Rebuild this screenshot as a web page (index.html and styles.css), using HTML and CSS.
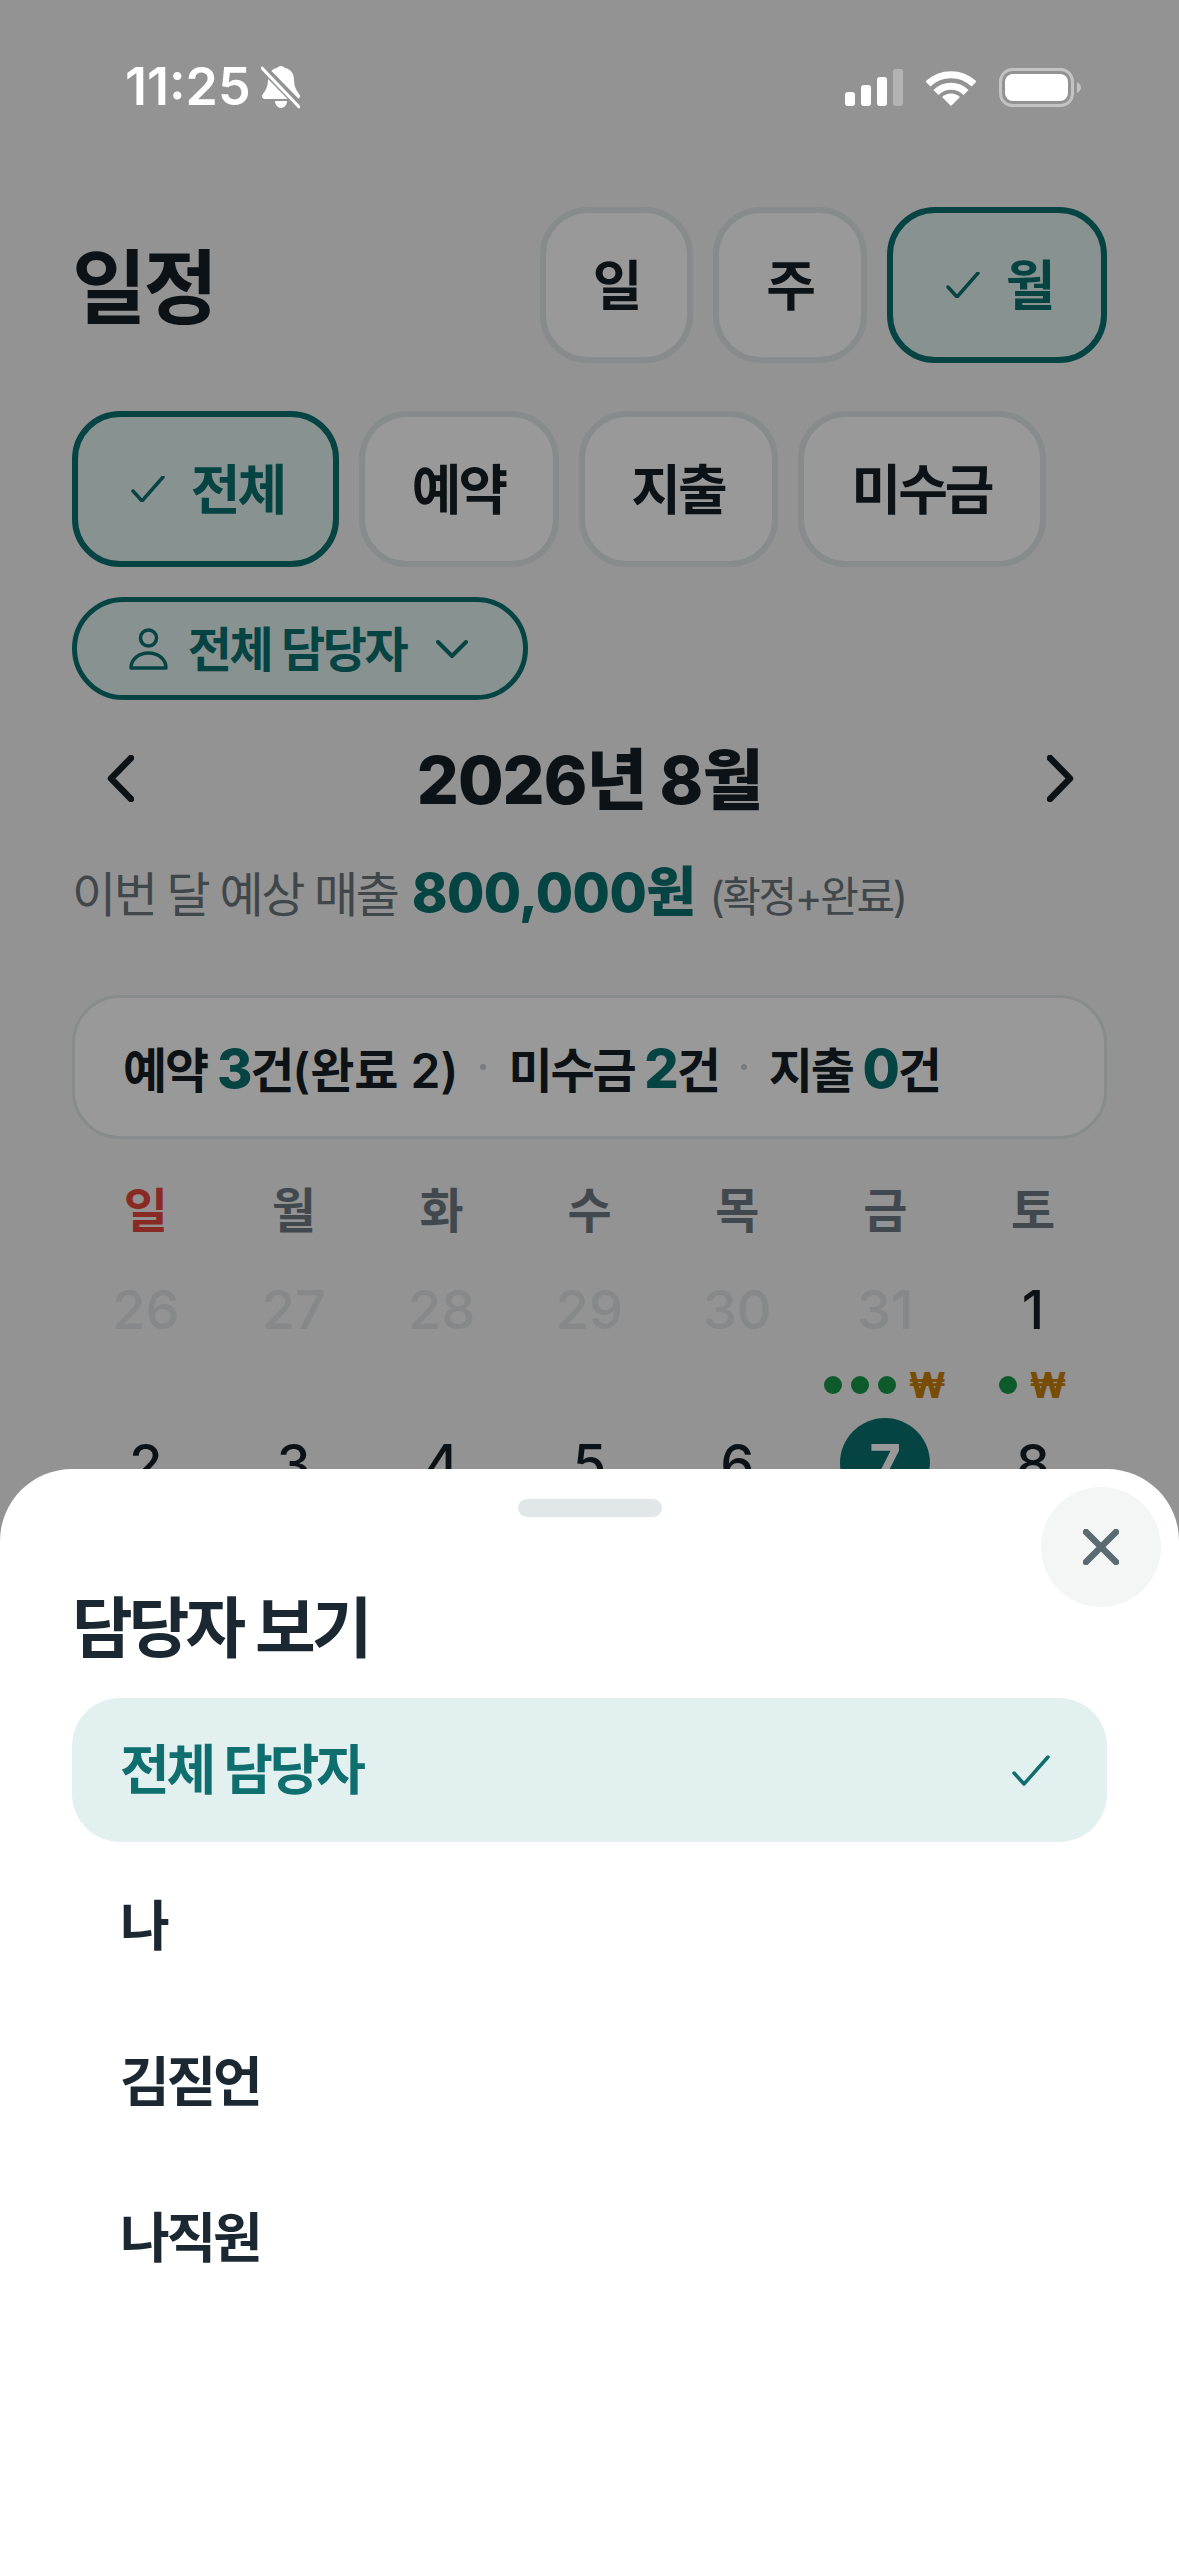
FILE: index.html
```html
<!DOCTYPE html>
<html lang="ko">

<head>
    <meta charset="UTF-8">
    <meta name="viewport" content="width=device-width, initial-scale=1.0">
    <title>일정</title>
    <link rel="stylesheet" href="styles.css">
</head>

<body>
    <!-- 상태바 -->
    <div class="status">
        <div class="status-left">
            <span class="time">11:25</span>
            <svg class="bell" width="39" height="43" viewBox="0 0 39 43">
                <path d="M20 0c2 0 3 1 4 2 6 1 9 6 9 12 0 6 2 10 5 14 2 2 1 5-2 5H4c-3 0-4-3-2-5 3-4 5-8 5-14 0-6 3-11 9-12 1-1 2-2 4-2z" fill="#fff" />
                <path d="M14 35h12c0 4-3 7-6 7s-6-3-6-7z" fill="#fff" />
                <path d="M0 0l39 40" stroke="#919392" stroke-width="8" />
                <path d="M1 2l37 39" stroke="#fff" stroke-width="3" stroke-linecap="round" />
            </svg>
        </div>
        <div class="status-right">
            <svg width="58" height="37" viewBox="0 0 58 37">
                <rect x="0" y="23" width="10" height="14" rx="3" fill="#fff" />
                <rect x="16" y="16" width="10" height="21" rx="3" fill="#fff" />
                <rect x="32" y="8" width="10" height="29" rx="3" fill="#fff" />
                <rect x="48" y="0" width="10" height="37" rx="3" fill="#fff" opacity="0.3" />
            </svg>
            <svg width="50" height="37" viewBox="0 0 50 37">
                <path d="M2 15a33 33 0 0 1 46 0M10 23.500a21 21 0 0 1 30 0" fill="none" stroke="#fff" stroke-width="7" />
                <path d="M25 37l-9-9a13 13 0 0 1 18 0z" fill="#fff" />
            </svg>
            <svg width="82" height="39" viewBox="0 0 82 39">
                <rect x="1.500" y="1.500" width="72" height="36" rx="12" fill="none" stroke="#fff" stroke-opacity="0.45" stroke-width="3" />
                <rect x="6" y="6" width="63" height="27" rx="8" fill="#fff" />
                <path d="M78 14c2 1 4 3 4 5.500s-2 4.500-4 5.500z" fill="#fff" fill-opacity="0.45" />
            </svg>
        </div>
    </div>

    <div class="page">
        <!-- 제목 + 보기 전환 -->
        <div class="header">
            <h1>일정</h1>
            <div class="chips">
                <div class="chip view-day">일</div>
                <div class="chip view-week">주</div>
                <div class="chip view-month active">
                    <svg width="34" height="26" viewBox="0 0 34 26"><path d="M2 15l9 10L32 1" fill="none" stroke="currentColor" stroke-width="3.500" stroke-linecap="round" stroke-linejoin="round" /></svg>
                    월
                </div>
            </div>
        </div>

        <!-- 필터 -->
        <div class="chips filters">
            <div class="chip filter-all active">
                <svg width="34" height="26" viewBox="0 0 34 26"><path d="M2 15l9 10L32 1" fill="none" stroke="currentColor" stroke-width="3.500" stroke-linecap="round" stroke-linejoin="round" /></svg>
                전체
            </div>
            <div class="chip filter-book">예약</div>
            <div class="chip filter-spend">지출</div>
            <div class="chip filter-unpaid">미수금</div>
        </div>

        <div class="staff-pill">
            <svg width="39" height="42" viewBox="0 0 39 42">
                <ellipse cx="19.500" cy="10" rx="8" ry="8" fill="none" stroke="currentColor" stroke-width="3.500" />
                <path d="M2 40c0-9 8-15 17.500-15S37 31 37 40z" fill="none" stroke="currentColor" stroke-width="3.500" stroke-linejoin="round" />
            </svg>
            <span>전체 담당자</span>
            <svg width="32" height="18" viewBox="0 0 32 18"><path d="M2 2l14 14L30 2" fill="none" stroke="currentColor" stroke-width="4" stroke-linecap="round" stroke-linejoin="round" /></svg>
        </div>

        <!-- 월 이동 -->
        <div class="month-nav">
            <svg width="27" height="47" viewBox="0 0 27 47"><path d="M24 3L4 23.500 24 44" fill="none" stroke="currentColor" stroke-width="6.500" stroke-linecap="round" stroke-linejoin="round" /></svg>
            <div class="month-title">2026년 8월</div>
            <svg width="27" height="47" viewBox="0 0 27 47"><path d="M3 3l20 20.500L3 44" fill="none" stroke="currentColor" stroke-width="6.500" stroke-linecap="round" stroke-linejoin="round" /></svg>
        </div>

        <div class="revenue">
            이번 달 예상 매출 <b>800,000원</b> <small>(확정+완료)</small>
        </div>

        <!-- 요약 -->
        <div class="summary">
            <span>예약 <b>3</b>건<u>(완료 2)</u></span>
            <i></i>
            <span>미수금 <b>2</b>건</span>
            <i></i>
            <span>지출 <b>0</b>건</span>
        </div>

        <!-- 달력 -->
        <div class="week">
            <div class="sun">일</div>
            <div>월</div>
            <div>화</div>
            <div>수</div>
            <div>목</div>
            <div>금</div>
            <div>토</div>
        </div>
        <div class="days">
            <div class="day muted"><div class="num">26</div></div>
            <div class="day muted"><div class="num">27</div></div>
            <div class="day muted"><div class="num">28</div></div>
            <div class="day muted"><div class="num">29</div></div>
            <div class="day muted"><div class="num">30</div></div>
            <div class="day muted">
                <div class="num">31</div>
                <div class="marks"><em></em><em></em><em></em><span>₩</span></div>
            </div>
            <div class="day">
                <div class="num">1</div>
                <div class="marks"><em></em><span>₩</span></div>
            </div>
            <div class="day"><div class="num">2</div></div>
            <div class="day"><div class="num">3</div></div>
            <div class="day"><div class="num">4</div></div>
            <div class="day"><div class="num">5</div></div>
            <div class="day"><div class="num">6</div></div>
            <div class="day today"><div class="num">7</div></div>
            <div class="day"><div class="num">8</div></div>
        </div>
    </div>

    <div class="overlay"></div>

    <!-- 담당자 보기 시트 -->
    <div class="sheet">
        <div class="handle"></div>
        <div class="close">
            <svg width="36" height="36" viewBox="0 0 36 36"><path d="M3 3l30 30M33 3L3 33" fill="none" stroke="currentColor" stroke-width="6.500" stroke-linecap="round" /></svg>
        </div>
        <h2>담당자 보기</h2>
        <div class="staff-list">
            <div class="staff selected">
                전체 담당자
                <svg width="38" height="31" viewBox="0 0 38 31"><path d="M2 18l10 11L36 2" fill="none" stroke="currentColor" stroke-width="3.500" stroke-linecap="round" stroke-linejoin="round" /></svg>
            </div>
            <div class="staff">나</div>
            <div class="staff">김짇언</div>
            <div class="staff">나직원</div>
        </div>
    </div>
</body>

</html>
```

FILE: styles.css
```css
* {
    box-sizing: border-box;
}

body {
    margin: 0;
    width: 1179px;
    height: 2556px;
    overflow: hidden;
    position: relative;
    background: #f3f5f4;
    font-family: Inter, "Noto Sans CJK KR", sans-serif;
    color: #151f26;
}

/* 상태바 */
.status {
    position: relative;
    z-index: 3;
    height: 174px;
    padding: 0 98px 0 125px;
    display: flex;
    align-items: center;
    justify-content: space-between;
    color: #fff;
}

.status-left {
    display: flex;
    align-items: center;
    gap: 10px;
}

.time {
    font-size: 52px;
    font-weight: 600;
    line-height: 60px;
}

.status-right {
    display: flex;
    align-items: center;
    gap: 23px;
}

.status svg {
    display: block;
}

.page {
    padding: 33px 72px 0;
}

.header {
    display: flex;
    align-items: center;
    justify-content: space-between;
}

h1 {
    margin: 0;
    padding-bottom: 8px;
    font-size: 81px;
    font-weight: 700;
    letter-spacing: -3px;
}

/* 칩 버튼 */
.chips {
    display: flex;
    gap: 20px;
}

.chip {
    height: 156px;
    padding: 0 1px 6px 0;
    display: flex;
    align-items: center;
    justify-content: center;
    gap: 26px;
    background: #fff;
    border: 6px solid #e3e8e9;
    border-radius: 48px;
    font-size: 54px;
    font-weight: 600;
    letter-spacing: -0.055em;
}

.chip svg {
    margin-top: 6px;
}

.chip.active {
    padding-left: 5px;
    background: #e3f4f1;
    border-color: #0a7170;
    color: #0a7170;
}

.view-day { width: 153px; }
.view-week { width: 154px; }
.view-month { width: 220px; }
.filter-all { width: 267px; }
.filter-book { width: 200px; }
.filter-spend { width: 199px; }
.filter-unpaid { width: 248px; }

.filters {
    margin-top: 48px;
}

.staff-pill {
    margin-top: 30px;
    width: 456px;
    height: 103px;
    padding-right: 3px;
    display: flex;
    align-items: center;
    justify-content: center;
    gap: 20px;
    background: #e3f4f1;
    border: 5px solid #0a7170;
    border-radius: 52px;
    color: #0a7170;
    font-size: 48px;
    font-weight: 600;
    letter-spacing: -0.05em;
}

.staff-pill span {
    padding-bottom: 6px;
}

.staff-pill svg:last-child {
    margin-left: 10px;
}

.month-nav {
    margin-top: 30px;
    height: 96px;
    padding: 0 33px 0 35px;
    display: flex;
    align-items: center;
    justify-content: space-between;
}

.month-title {
    padding: 0 2px 6px 0;
    font-size: 66px;
    font-weight: 800;
    letter-spacing: -0.015em;
}

.revenue {
    margin-top: 31px;
    height: 72px;
    display: flex;
    align-items: baseline;
    gap: 14px;
    color: #6c777e;
    font-size: 48px;
    letter-spacing: -0.05em;
    line-height: 72px;
}

.revenue b {
    color: #0a7170;
    font-size: 54px;
    font-weight: 800;
    letter-spacing: -0.01em;
}

.revenue small {
    font-size: 42px;
}

/* 요약 카드 */
.summary {
    margin-top: 66px;
    height: 144px;
    padding: 0 48px;
    display: flex;
    align-items: center;
    gap: 22px;
    background: #fff;
    border: 3px solid #e3e8e9;
    border-radius: 48px;
    font-size: 48px;
    font-weight: 600;
    letter-spacing: -0.045em;
}

.summary b {
    color: #0a7170;
    font-size: 54px;
    font-weight: 800;
}

.summary u {
    text-decoration: none;
    letter-spacing: 0;
}

.summary i {
    width: 6px;
    height: 6px;
    border-radius: 50%;
    background: #c8cfd2;
}

/* 달력 */
.week {
    margin-top: 32px;
    height: 72px;
    display: grid;
    grid-template-columns: repeat(7, 1fr);
    align-items: center;
    text-align: center;
    color: #6f7b82;
    font-size: 48px;
    font-weight: 600;
}

.week .sun {
    color: #e5483c;
}

.days {
    margin-top: 21px;
    display: grid;
    grid-template-columns: repeat(7, 1fr);
    grid-auto-rows: 154px;
}

.day {
    display: flex;
    flex-direction: column;
    align-items: center;
    gap: 16px;
}

.num {
    width: 90px;
    height: 90px;
    display: flex;
    align-items: center;
    justify-content: center;
    border-radius: 50%;
    font-size: 54px;
    font-weight: 500;
}

.day.muted .num {
    color: #dfe3e5;
}

.day.today .num {
    background: #0a7170;
    color: #fff;
    font-weight: 700;
}

.marks {
    height: 30px;
    display: flex;
    align-items: center;
    gap: 9px;
}

.marks em {
    width: 18px;
    height: 18px;
    border-radius: 50%;
    background: #169646;
}

.marks span {
    margin-left: 3px;
    color: #c87f08;
    font-size: 35px;
    font-weight: 800;
    line-height: 30px;
}

/* 오버레이 + 시트 */
.overlay {
    position: absolute;
    inset: 0;
    z-index: 1;
    background: rgba(0, 0, 0, 0.4);
}

.sheet {
    position: absolute;
    left: 0;
    right: 0;
    top: 1469px;
    bottom: 0;
    z-index: 2;
    padding: 30px 72px 0;
    background: #fff;
    border-radius: 72px 72px 0 0;
}

.handle {
    width: 144px;
    height: 18px;
    margin: 0 auto;
    border-radius: 9px;
    background: #e1e7e7;
}

.close {
    position: absolute;
    top: 18px;
    right: 18px;
    width: 120px;
    height: 120px;
    display: flex;
    align-items: center;
    justify-content: center;
    border-radius: 50%;
    background: #f4f6f6;
    color: #5b6b72;
}

h2 {
    margin: 66px 0 0;
    font-size: 66px;
    font-weight: 600;
    letter-spacing: -0.06em;
    line-height: 90px;
    color: #1b2831;
}

.staff-list {
    margin-top: 25px;
    display: flex;
    flex-direction: column;
    gap: 12px;
}

.staff {
    height: 144px;
    padding: 0 57px 8px 48px;
    display: flex;
    align-items: center;
    justify-content: space-between;
    border-radius: 48px;
    font-size: 54px;
    font-weight: 600;
    letter-spacing: -0.06em;
    color: #1b2831;
}

.staff svg {
    margin-top: 8px;
}

.staff.selected {
    background: #e2f0f0;
    color: #0f6e6e;
}
```
